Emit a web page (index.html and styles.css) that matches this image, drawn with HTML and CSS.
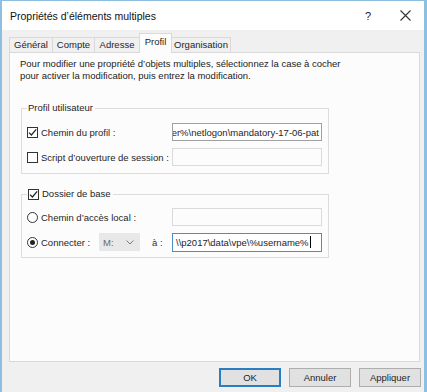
FILE: index.html
```html
<!DOCTYPE html>
<html lang="fr">
<head>
<meta charset="utf-8">
<title>Propriétés d'éléments multiples</title>
<link rel="stylesheet" href="styles.css">
</head>
<body>
<div class="window">
  <div class="titlebar">
    <span class="title">Propriétés d’éléments multiples</span>
    <span class="help">?</span>
    <span class="close"><svg width="11" height="11" viewBox="0 0 11 11"><path d="M0.5 0.5 L10.5 10.5 M10.5 0.5 L0.5 10.5" stroke="#333" stroke-width="1.1" fill="none"/></svg></span>
  </div>
  <div class="content">
    <div class="tabs">
      <div class="tab t-gen">Général</div>
      <div class="tab t-cpt">Compte</div>
      <div class="tab t-adr">Adresse</div>
      <div class="tab active t-pro">Profil</div>
      <div class="tab t-org">Organisation</div>
    </div>
    <div class="panel">
      <p class="desc">Pour modifier une propriété d’objets multiples, sélectionnez la case à cocher<br>pour activer la modification, puis entrez la modification.</p>

      <fieldset class="group g1">
        <legend class="legend">Profil utilisateur</legend>
        <div class="row first">
          <div class="lbl"><span class="cb checked"><svg width="9" height="9" viewBox="0 0 9 9"><path d="M1 4.6 L3.4 7 L8.2 1.4" stroke="#222" stroke-width="1.2" fill="none"/></svg></span>Chemin du profil :</div>
          <div class="input filled"><span class="val">er%\netlogon\mandatory-17-06-pat</span></div>
        </div>
        <div class="row">
          <div class="lbl"><span class="cb"></span>Script d’ouverture de session :</div>
          <div class="input disabled"></div>
        </div>
      </fieldset>

      <fieldset class="group g2">
        <legend class="legend legend-cb"><span class="cb checked"><svg width="9" height="9" viewBox="0 0 9 9"><path d="M1 4.6 L3.4 7 L8.2 1.4" stroke="#222" stroke-width="1.2" fill="none"/></svg></span>Dossier de base</legend>
        <div class="row first">
          <div class="lbl"><span class="rb"></span>Chemin d’accès local :</div>
          <div class="input disabled"></div>
        </div>
        <div class="row">
          <div class="lbl">
            <span class="conn"><span class="rb on"></span>Connecter :</span>
            <span class="combo"><span class="combo-val">M:</span><svg width="8" height="5" viewBox="0 0 8 5"><path d="M0.5 0.5 L4 4 L7.5 0.5" stroke="#7a7a7a" stroke-width="1" fill="none"/></svg></span>
            <span class="a-label">à :</span>
          </div>
          <div class="input focus"><span class="val">\\p2017\data\vpe\%username%</span><span class="caret"></span></div>
        </div>
      </fieldset>
    </div>
    <div class="buttons">
      <div class="btn default">OK</div>
      <div class="btn">Annuler</div>
      <div class="btn">Appliquer</div>
    </div>
  </div>
</div>
</body>
</html>
```
FILE: styles.css
```css
* { box-sizing: border-box; }
body {
  margin: 0;
  width: 427px;
  height: 392px;
  overflow: hidden;
  font-family: "Liberation Sans", Arial, sans-serif;
  font-size: 9.5px;
  color: #1e1e1e;
  background: #f0f0f0;
}
.window {
  height: 392px;
  border-style: solid;
  border-color: #8fbfe0;
  border-width: 1px 3px 0 2px;
  background: #f0f0f0;
  display: flex;
  flex-direction: column;
}
.titlebar {
  height: 29px;
  flex: none;
  background: #ffffff;
  display: flex;
  align-items: center;
  padding-left: 8px;
  padding-right: 4px;
}
.title {
  flex: 1;
  font-size: 10.5px;
  color: #111;
}
.help {
  width: 30px;
  text-align: center;
  font-size: 11px;
  color: #222;
  margin-right: 7px;
}
.close {
  width: 30px;
  height: 20px;
  display: flex;
  align-items: center;
  justify-content: center;
}
.content {
  flex: 1;
  display: flex;
  flex-direction: column;
  padding: 0 3px 0 7px;
}
.tabs {
  height: 22px;
  display: flex;
  align-items: flex-end;
  position: relative;
  z-index: 1;
}
.tab {
  height: 15px;
  line-height: 14px;
  border: 1px solid #d9d9d9;
  border-bottom: none;
  border-right: none;
  background: #f0f0f0;
  text-align: center;
  color: #1e1e1e;
}
.t-gen { width: 43px; }
.t-cpt { width: 42px; }
.t-adr { width: 45px; }
.t-pro { width: 33px; }
.t-org { width: 59px; border-right: 1px solid #d9d9d9; }
.tab.active {
  line-height: 16px;
  background: #fcfcfc;
  margin-bottom: -1px;
  height: 20px;
  border-right: 1px solid #d9d9d9;
}
.tab.active + .tab { border-left: none; }
.panel {
  height: 310px;
  flex: none;
  margin-right: 1px;
  border: 1px solid #d9d9d9;
  background: #fcfcfc;
  padding: 0;
}
.desc {
  margin: 0;
  padding: 5px 0 0 10px;
  line-height: 12px;
  color: #222;
}
.group {
  width: 308px;
  margin: 20px 0 0 11px;
  border: 1px solid #dcdcdc;
  padding: 0 6px 6px 5px;
  min-width: 0;
}
.group.g2 { margin-top: 14px; }
.legend {
  padding: 0 2px 0 1px;
  line-height: 12px;
  height: 12px;
  display: flex;
  align-items: center;
}
.row {
  height: 18px;
  display: flex;
  align-items: center;
  margin-top: 7px;
}
.g1 .row.first { margin-top: 9px; }
.g1 .row:last-child { margin-bottom: 1px; }
.g2 .row.first { margin-top: 8px; }
.lbl {
  width: 145px;
  flex: none;
  display: flex;
  align-items: center;
  white-space: nowrap;
}
.cb {
  width: 11px;
  height: 11px;
  flex: none;
  border: 1px solid #333;
  background: #fff;
  margin-right: 3px;
  display: flex;
  align-items: center;
  justify-content: center;
}
.rb {
  width: 11px;
  height: 11px;
  flex: none;
  border: 1px solid #333;
  border-radius: 50%;
  background: #fff;
  margin-right: 3px;
  display: flex;
  align-items: center;
  justify-content: center;
}
.rb.on::after {
  content: "";
  width: 5px;
  height: 5px;
  border-radius: 50%;
  background: #222;
}
.conn {
  width: 72px;
  display: flex;
  align-items: center;
}
.combo {
  width: 41px;
  height: 18px;
  background: #e8e8e8;
  display: flex;
  align-items: center;
  justify-content: space-between;
  padding: 0 6px 0 4px;
  color: #6a6a6a;
}
.a-label {
  margin-left: 12px;
  color: #333;
}
.input {
  width: 150px;
  height: 18px;
  flex: none;
  border: 1px solid #d9d9d9;
  background: #fff;
  display: flex;
  align-items: center;
  overflow: hidden;
  white-space: nowrap;
}
.input.disabled {
  background: #fcfcfc;
  border-color: #dadada;
}
.input.filled {
  border-color: #a0a0a0;
  justify-content: flex-end;
  padding-right: 2px;
}
.input.focus {
  border-color: #4b8fc8;
  padding-left: 3px;
  height: 19px;
}
.caret {
  width: 1px;
  height: 12px;
  background: #000;
  margin-left: 1px;
}
.buttons {
  display: flex;
  justify-content: flex-end;
  gap: 8px;
  margin-top: 6px;
}
.btn {
  width: 62px;
  height: 19px;
  border: 1px solid #adadad;
  background: #e1e1e1;
  display: flex;
  align-items: center;
  justify-content: center;
  color: #1e1e1e;
}
.btn.default {
  border-color: #2b7cc1;
  box-shadow: inset 0 0 0 1px #2b7cc1;
}
```
